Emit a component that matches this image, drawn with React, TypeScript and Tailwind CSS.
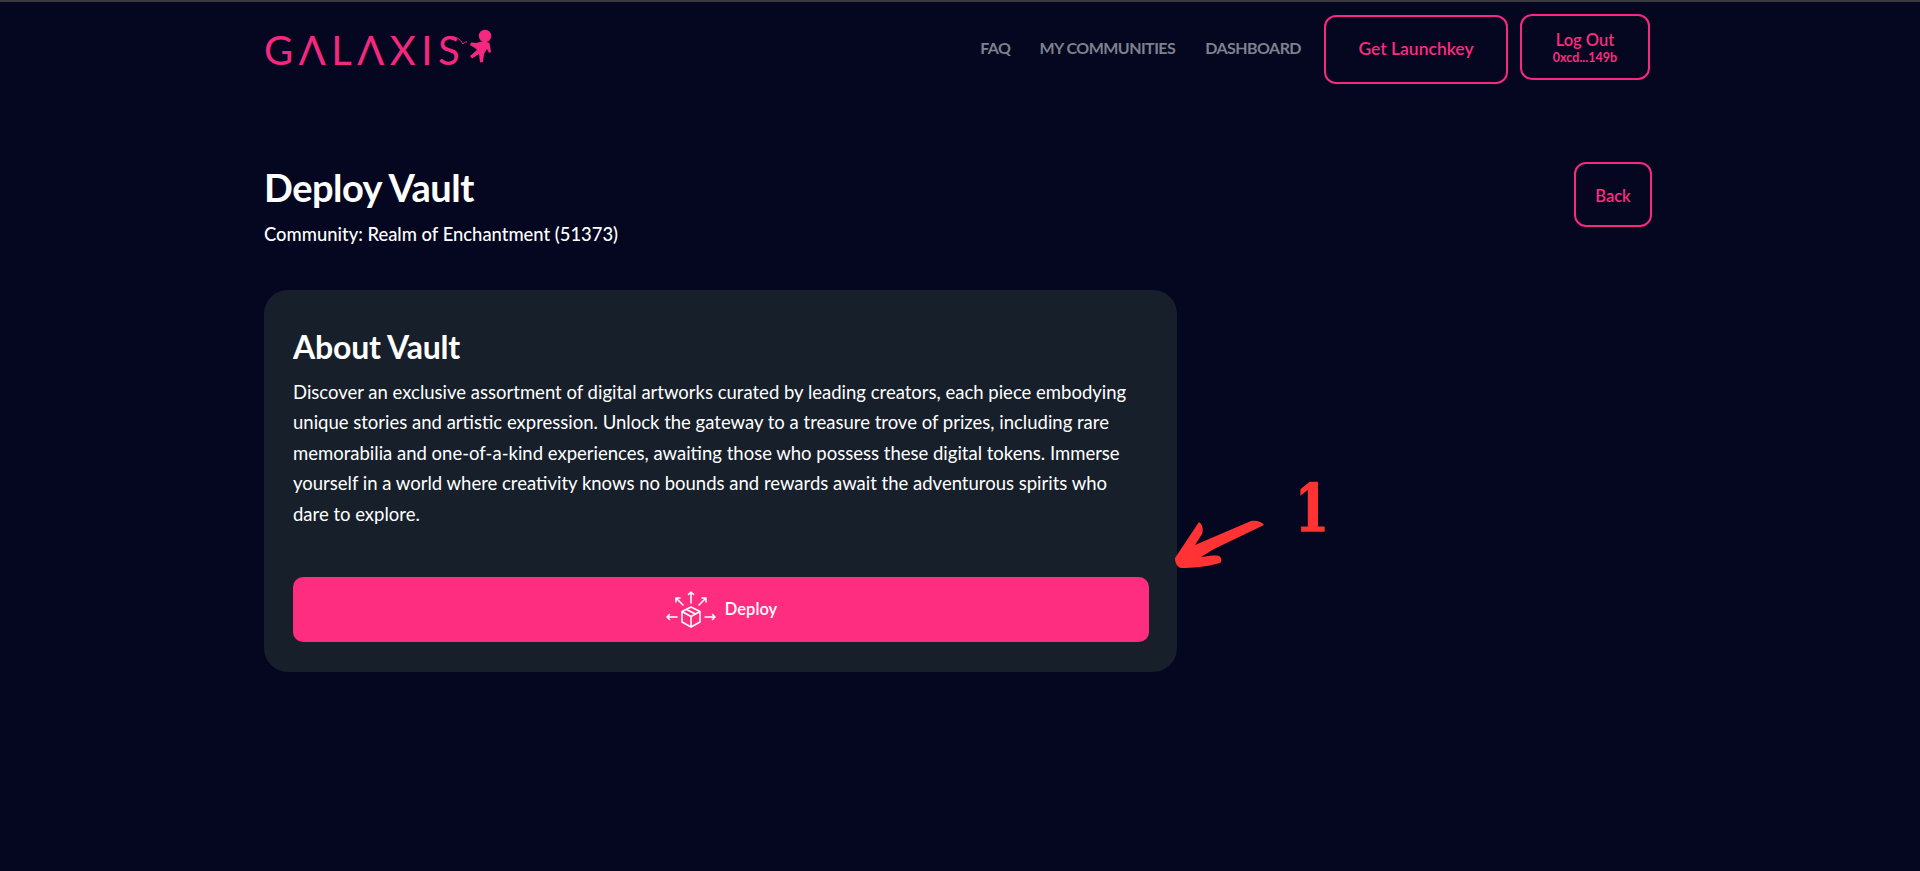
export default function App() {
  const pinkBtn = "flex flex-col items-center justify-center rounded-xl border-2 border-[#f7287f] text-[#ff2a80] font-semibold";
  return (
    <div className="relative min-h-[871px] bg-[#04071f] border-t-2 border-[#3a3b40] text-white font-['Lato','Open_Sans',sans-serif]">
      <div className="ml-[264px] w-[1386px]">
        <header className="flex items-start justify-between h-[145px]">
          <div className="flex items-start mt-[23px] text-[#f5277f]">
            <span className="text-[40px] leading-[50px] font-normal tracking-[5.5px]">GΛLΛXIS</span>
            <svg width="48" height="40" viewBox="0 0 48 40" className="-ml-[19px] mt-[2px]" fill="currentColor">
              <path d="M4 10 C10 9 14 12 17 17 C18 15 19 15 21 15" fill="none" stroke="currentColor" strokeWidth="1" />
              <circle cx="39" cy="9" r="6.2" />
              <path d="M30 16 L25 15.5 L24 18 L29 21 L31 23 L24 29 L26 31.5 L33 27 L34 35.5 L37 35 L38 27 L41 22 L43 26 L45 25 L43.5 16 L38 14 Z" />
            </svg>
          </div>
          <nav className="flex items-start">
            <a className="mt-[36px] text-[16px] leading-5 font-bold text-[#7e818e] tracking-[-0.55px]">FAQ</a>
            <a className="mt-[36px] ml-[29px] text-[16px] leading-5 font-bold text-[#7e818e] tracking-[-0.55px]">MY COMMUNITIES</a>
            <a className="mt-[36px] ml-[30px] text-[16px] leading-5 font-bold text-[#7e818e] tracking-[-0.55px]">DASHBOARD</a>
            <button className={`${pinkBtn} ml-[23px] mt-[13px] w-[184px] h-[69px] text-[17.5px]`}>Get Launchkey</button>
            <button className={`${pinkBtn} ml-[12px] mt-[12px] w-[130px] h-[66px] text-[16.5px] leading-[20px]`}>
              <span>Log Out</span>
              <span className="text-[12.5px] leading-[15px] font-bold">0xcd...149b</span>
            </button>
          </nav>
        </header>
        <section className="flex items-start justify-between">
          <div>
            <h1 className="text-[38px] leading-[50px] font-bold tracking-[-0.5px] mt-[15px]">Deploy Vault</h1>
            <p className="text-[18.4px] leading-[28px] font-medium mt-[8px]">Community: Realm of Enchantment (51373)</p>
          </div>
          <button className={`${pinkBtn} w-[78px] -mr-[2px] h-[65px] mt-[15px] pt-[3px] text-[16.5px]`}>Back</button>
        </section>
        <section className="mt-[42px] w-[913px] h-[382px] rounded-[24px] bg-[#171f2b] px-[29px] pt-[37px]">
          <h2 className="text-[32px] leading-[40px] font-bold tracking-[-0.2px]">About Vault</h2>
          <p className="text-[18.5px] leading-[30.4px] mt-[10px] w-[856px]">
            Discover an exclusive assortment of digital artworks curated by leading creators, each piece embodying<br />
            unique stories and artistic expression. Unlock the gateway to a treasure trove of prizes, including rare<br />
            memorabilia and one-of-a-kind experiences, awaiting those who possess these digital tokens. Immerse<br />
            yourself in a world where creativity knows no bounds and rewards await the adventurous spirits who<br />
            dare to explore.
          </p>
          <button className="mt-[48px] flex items-center justify-center w-[856px] h-[65px] rounded-[10px] bg-[#ff2d7f] text-white">
            <svg width="52" height="38" viewBox="0 0 52 38" fill="none" stroke="#fff" strokeWidth="1.5" strokeLinecap="round" strokeLinejoin="round">
              <path d="M26 16 L35 20.5 V31 L26 36 L17 31 V20.5 Z M17 20.5 L26 25.5 L35 20.5 M26 25.5 V36 M21.5 18.5 L30.5 23" />
              <path d="M26 12 V1 M23.5 3.5 L26 1 L28.5 3.5 M18 14 L11 7 M11 11 V7 H15 M34 14 L41 7 M37 7 H41 V11" />
              <path d="M12 26 H2 M4.5 23.5 L2 26 L4.5 28.5 M40 26 H50 M47.5 23.5 L50 26 L47.5 28.5" />
            </svg>
            <span className="ml-[8px] text-[16.5px] font-semibold">Deploy</span>
          </button>
        </section>
      </div>
      <svg className="absolute left-[1170px] top-[518px]" width="100" height="56" viewBox="0 0 100 56" fill="#ff3333">
        <path d="M6 40 L30 4 C33 6 35 11 33 16 L26 27 L82 3 C88 2 93 4 95 7 L45 31 L32 39 C40 38 46 37 50 38 C53 40 53 44 51 45 C38 49 22 50 12 50 C8 49 6 45 6 40 Z" transform="translate(-1 -2)" />
      </svg>
      <span className="absolute left-[1295px] top-[466px] text-[65px] leading-[80px] font-bold text-[#ff3333] font-['DejaVu_Serif',serif] scale-x-75 origin-left [-webkit-text-stroke:1.5px_#ff3333]">1</span>
    </div>
  );
}
